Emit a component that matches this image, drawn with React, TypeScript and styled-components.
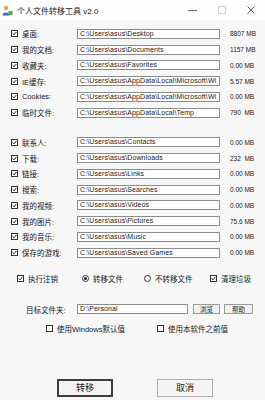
import React from 'react';
import styled, {createGlobalStyle} from 'styled-components';

const GlobalStyle = createGlobalStyle`
  html, body {
    margin: 0;
    padding: 0;
    background: #f7f7f7;
  }
  body {
    font-family: "Liberation Sans", "Noto Sans CJK SC", sans-serif;
    color: #1a1a1a;
  }
`;

const Window = styled.div`
  width: 265px;
  height: 400px;
  background: #f7f7f7;
  overflow: hidden;
  display: flex;
  flex-direction: column;
`;

const TitleBar = styled.div`
  height: 20px;
  flex: none;
  display: flex;
  align-items: center;
  background: #fdfdfd;
  padding-left: 2px;
`;

const TitleText = styled.span`
  font-size: 8px;
  margin-left: 4px;
  color: #222;
`;

const TitleControls = styled.div`
  margin-left: auto;
  display: flex;
  align-items: center;
  height: 100%;
`;

const ControlBox = styled.div`
  width: 29px;
  height: 100%;
  display: flex;
  align-items: center;
  justify-content: center;
`;

const Body = styled.div`
  flex: 1;
  display: flex;
  flex-direction: column;
`;

const Group = styled.div<{$top: number}>`
  margin-top: ${p => p.$top}px;
  display: flex;
  flex-direction: column;
`;

const Row = styled.div`
  height: 15.75px;
  display: flex;
  align-items: center;
  padding-left: 11px;
`;

const Label = styled.span<{$w: number}>`
  width: ${p => p.$w}px;
  font-size: 7.5px;
  white-space: nowrap;
  flex: none;
`;

const Field = styled.div<{$w: number}>`
  width: ${p => p.$w}px;
  height: 10px;
  box-sizing: border-box;
  border: 1px solid #8c8c8c;
  background: #fff;
  font-size: 7px;
  letter-spacing: 0.1px;
  line-height: 8px;
  padding-left: 2px;
  overflow: hidden;
  white-space: nowrap;
  flex: none;
`;

const Size = styled.span`
  margin-left: 10px;
  font-size: 6.5px;
  white-space: pre;
  color: #222;
`;

const Box = styled.span`
  width: 7px;
  height: 7px;
  box-sizing: border-box;
  border: 1px solid #333;
  background: #fff;
  display: inline-flex;
  align-items: center;
  justify-content: center;
  flex: none;
  margin-right: 4px;
`;

const Radio = styled.span<{$on?: boolean}>`
  width: 7px;
  height: 7px;
  box-sizing: border-box;
  border: 1px solid #333;
  border-radius: 50%;
  background: #fff;
  display: inline-flex;
  align-items: center;
  justify-content: center;
  flex: none;
  margin-right: 4px;
  &::after {
    content: '';
    width: 3px;
    height: 3px;
    border-radius: 50%;
    background: ${p => (p.$on ? '#222' : 'transparent')};
  }
`;

const OptionRow = styled.div<{$top: number; $left: number}>`
  margin-top: ${p => p.$top}px;
  padding-left: ${p => p.$left}px;
  height: 13px;
  display: flex;
  align-items: center;
`;

const Option = styled.div<{$w: number}>`
  width: ${p => p.$w}px;
  display: flex;
  align-items: center;
  font-size: 7.5px;
  white-space: nowrap;
  flex: none;
`;

const SmallButton = styled.div<{$w: number; $gap: number}>`
  width: ${p => p.$w}px;
  height: 10px;
  box-sizing: border-box;
  margin-left: ${p => p.$gap}px;
  border: 1px solid #9a9a9a;
  background: #f0f0f0;
  font-size: 6.5px;
  display: flex;
  align-items: center;
  justify-content: center;
  flex: none;
`;

const ButtonRow = styled.div`
  margin-top: 44px;
  padding-left: 57px;
  display: flex;
  gap: 44px;
`;

const BigButton = styled.div<{$primary?: boolean}>`
  width: 56px;
  height: 18px;
  box-sizing: border-box;
  border: ${p => (p.$primary ? '2px solid #3c3c3c' : '1px solid #adadad')};
  background: #f4f4f4;
  font-size: 9px;
  display: flex;
  align-items: center;
  justify-content: center;
`;

const Check = () => (
  <svg width="5" height="5" viewBox="0 0 5 5">
    <path d="M0.6 2.4 L2 3.8 L4.4 1" stroke="#222" strokeWidth="1" fill="none" />
  </svg>
);

const CheckBox = () => <Box><Check /></Box>;
const EmptyBox = () => <Box />;

const AppIcon = () => (
  <svg width="11" height="11" viewBox="0 0 11 11">
    <circle cx="4" cy="3" r="2.2" fill="#e8a25a" />
    <path d="M0.5 10.5 C0.5 6.5 7.5 6.5 7.5 10.5 Z" fill="#3a6fc4" />
    <rect x="6.5" y="6" width="4" height="4" fill="#5aa845" />
  </svg>
);

type Item = {label: string; path: string; size: string};

const groupA: Item[] = [
  {label: '桌面:', path: 'C:\\Users\\asus\\Desktop', size: '8807 MB'},
  {label: '我的文档:', path: 'C:\\Users\\asus\\Documents', size: '1157 MB'},
  {label: '收藏夹:', path: 'C:\\Users\\asus\\Favorites', size: '0.00 MB'},
  {label: 'IE缓存:', path: 'C:\\Users\\asus\\AppData\\Local\\Microsoft\\Wi', size: '5.57 MB'},
  {label: 'Cookies:', path: 'C:\\Users\\asus\\AppData\\Local\\Microsoft\\Wi', size: '0.00 MB'},
  {label: '临时文件:', path: 'C:\\Users\\asus\\AppData\\Local\\Temp', size: '790  MB'},
];

const groupB: Item[] = [
  {label: '联系人:', path: 'C:\\Users\\asus\\Contacts', size: '0.00 MB'},
  {label: '下载:', path: 'C:\\Users\\asus\\Downloads', size: '232  MB'},
  {label: '链接:', path: 'C:\\Users\\asus\\Links', size: '0.00 MB'},
  {label: '搜索:', path: 'C:\\Users\\asus\\Searches', size: '0.00 MB'},
  {label: '我的视频:', path: 'C:\\Users\\asus\\Videos', size: '0.00 MB'},
  {label: '我的图片:', path: 'C:\\Users\\asus\\Pictures', size: '75.6 MB'},
  {label: '我的音乐:', path: 'C:\\Users\\asus\\Music', size: '0.00 MB'},
  {label: '保存的游戏:', path: 'C:\\Users\\asus\\Saved Games', size: '0.00 MB'},
];

const FolderRows = ({items}: {items: Item[]}) => <>
  {items.map((item, idx) =>
    <Row key={idx}>
      <CheckBox />
      <Label $w={55}>{item.label}</Label>
      <Field $w={143}>{item.path}</Field>
      <Size>{item.size}</Size>
    </Row>)}
</>;

export default function App() {
  return <>
    <GlobalStyle />
    <Window>
      <TitleBar>
        <AppIcon />
        <TitleText>个人文件转移工具 v2.0</TitleText>
        <TitleControls>
          <ControlBox>
            <svg width="9" height="9" viewBox="0 0 9 9">
              <path d="M0 4.5 H9" stroke="#444" strokeWidth="0.8" />
            </svg>
          </ControlBox>
          <ControlBox>
            <svg width="8" height="8" viewBox="0 0 8 8">
              <rect x="0.5" y="0.5" width="7" height="7" fill="none" stroke="#c8c8c8" strokeWidth="0.8" />
            </svg>
          </ControlBox>
          <ControlBox>
            <svg width="8" height="8" viewBox="0 0 8 8">
              <path d="M0.5 0.5 L7.5 7.5 M7.5 0.5 L0.5 7.5" stroke="#333" strokeWidth="0.8" />
            </svg>
          </ControlBox>
        </TitleControls>
      </TitleBar>
      <Body>
        <Group $top={6}>
          <FolderRows items={groupA} />
        </Group>
        <Group $top={14}>
          <FolderRows items={groupB} />
        </Group>

        <OptionRow $top={11} $left={17}>
          <Option $w={65}><CheckBox />执行注销</Option>
          <Option $w={62}><Radio $on />转移文件</Option>
          <Option $w={66}><Radio />不转移文件</Option>
          <Option $w={50}><CheckBox />清理垃圾</Option>
        </OptionRow>

        <OptionRow $top={18} $left={26}>
          <Label $w={51}>目标文件夹:</Label>
          <Field $w={111}>D:\Personal</Field>
          <SmallButton $w={27} $gap={5}>浏览</SmallButton>
          <SmallButton $w={29} $gap={4}>帮助</SmallButton>
        </OptionRow>

        <OptionRow $top={6} $left={46}>
          <Option $w={111}><EmptyBox />使用Windows默认值</Option>
          <Option $w={80}><EmptyBox />使用本软件之前值</Option>
        </OptionRow>

        <ButtonRow>
          <BigButton $primary>转移</BigButton>
          <BigButton>取消</BigButton>
        </ButtonRow>
      </Body>
    </Window>
  </>;
}
